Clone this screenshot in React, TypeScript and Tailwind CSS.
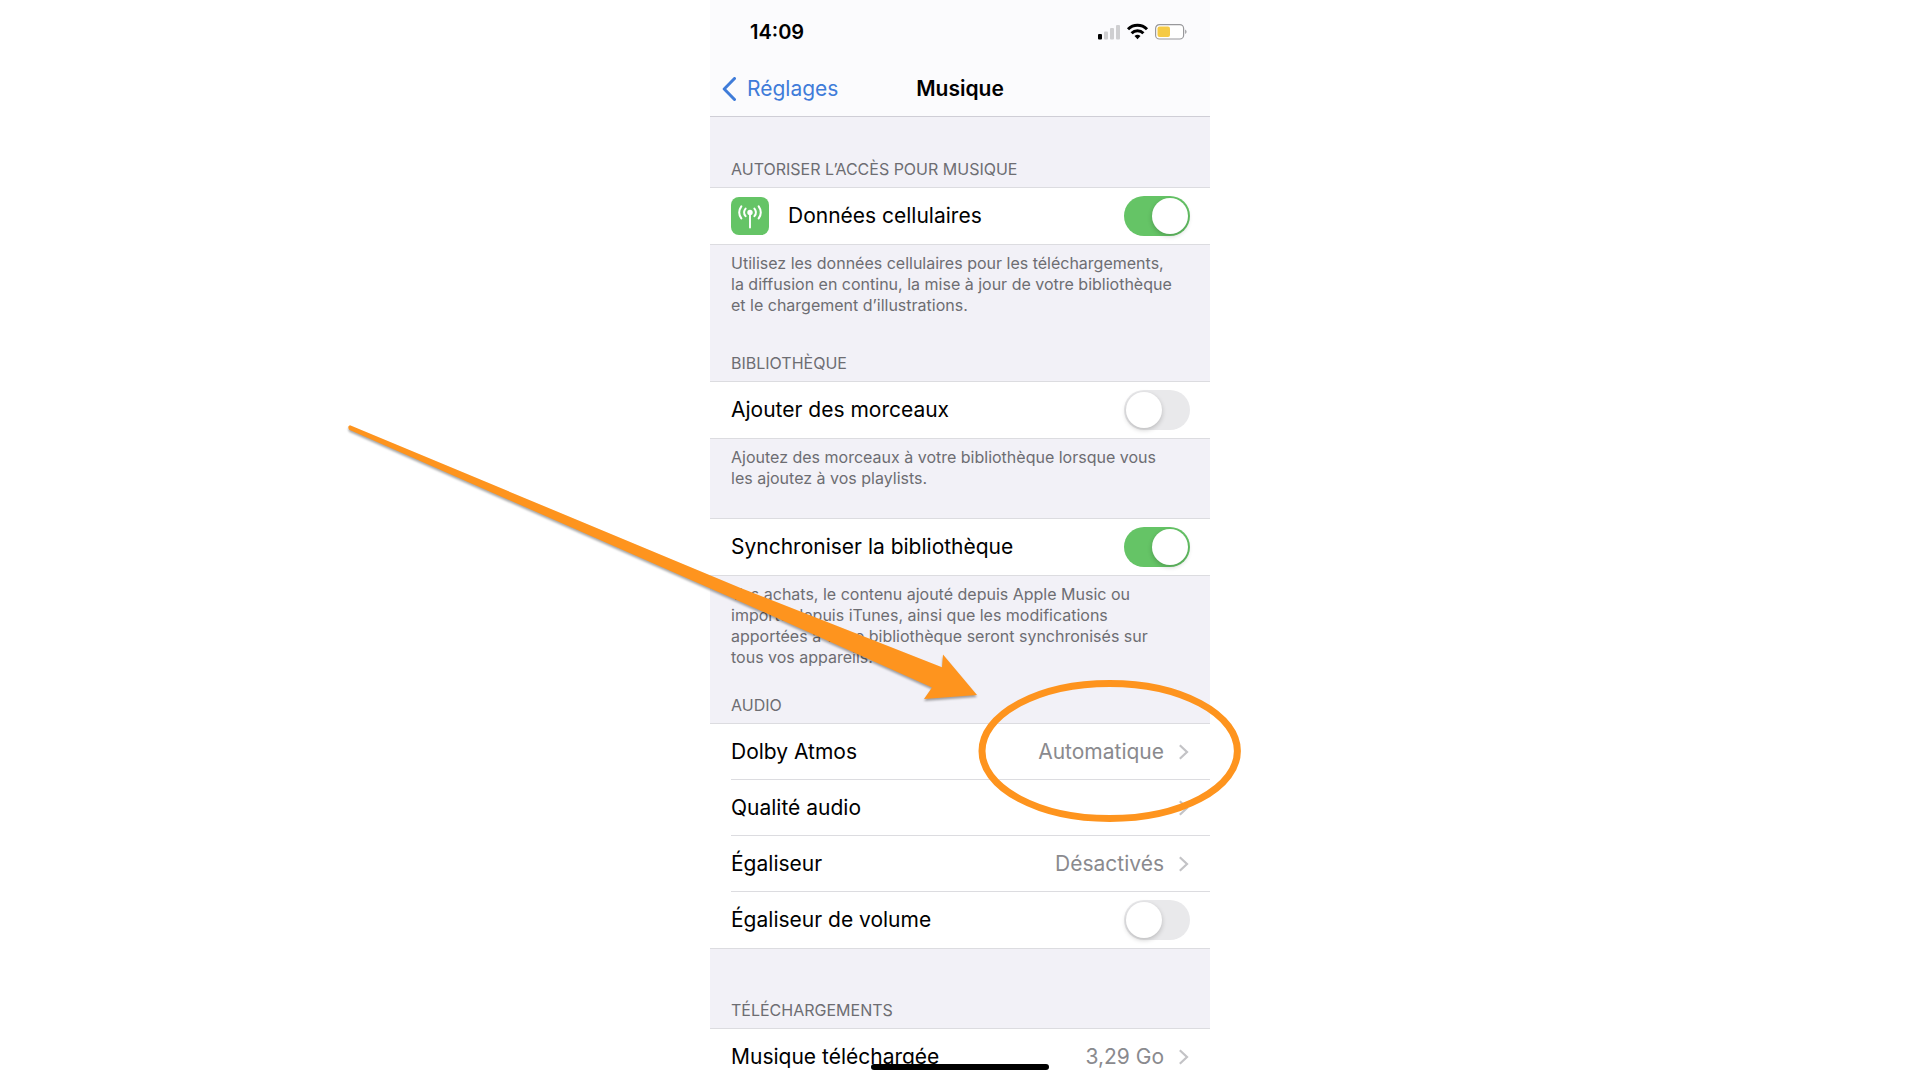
import { useId, type ReactNode } from "react";

function Chevron() {
  return (
    <svg className="ml-3.5 h-4 w-3 shrink-0" viewBox="0 0 12 16" fill="none" aria-hidden="true">
      <path d="M1.800 1.200 9 8l-7.200 6.800" stroke="#c3c3c6" strokeWidth="2.200" />
    </svg>
  );
}

function CellularIcon() {
  return (
    <svg className="mr-[19px] size-[38px] shrink-0" viewBox="0 0 38 38" fill="none" aria-hidden="true">
      <rect width="38" height="38" rx="8" fill="#65c466" />
      <g stroke="#fff" strokeLinecap="round">
        <path d="M19 16v14.500" strokeWidth="1.900" />
        <path d="M14.600 11.600a6 6 0 0 0 0 7.600M23.400 11.600a6 6 0 0 1 0 7.600" strokeWidth="2" />
        <path d="M10.300 9.400a10.500 10.500 0 0 0 0 12M27.700 9.400a10.500 10.500 0 0 1 0 12" strokeWidth="2" />
      </g>
      <circle cx="19" cy="15.400" r="2.700" fill="#fff" />
    </svg>
  );
}

function SwitchRow({ label, on = false, icon }: { label: string; on?: boolean; icon?: ReactNode }) {
  const id = useId();
  return (
    <div className="flex h-14 items-center pr-5">
      {icon}
      <label htmlFor={id} className="grow text-[21px] leading-7 text-black">
        {label}
      </label>
      <input
        id={id}
        type="checkbox"
        role="switch"
        defaultChecked={on}
        className="flex h-10 w-[66px] shrink-0 appearance-none items-center rounded-full bg-[#e9e9eb] px-0.5 before:size-9 before:rounded-full before:bg-white before:shadow-[0_2px_5px_rgba(0,0,0,0.2)] checked:justify-end checked:bg-[#65c466]"
      />
    </div>
  );
}

function LinkRow({ label, value }: { label: string; value?: string }) {
  return (
    <a href="#" className="flex h-14 items-center pr-5 text-[21px] leading-7">
      <span className="grow text-black">{label}</span>
      {value && <span className="text-[#8a8a8e]">{value}</span>}
      <Chevron />
    </a>
  );
}

function Group({ children }: { children: ReactNode }) {
  return (
    <div className="border-y border-[#dcdce0] bg-white pl-[21px]">
      <div className="divide-y divide-[#dcdce0]">{children}</div>
    </div>
  );
}

function Heading({ children }: { children: ReactNode }) {
  return <h2 className="px-[21px] pb-2 text-[16px] leading-5 text-[#6d6d72]">{children}</h2>;
}

function Note({ lines }: { lines: string[] }) {
  return (
    <p className="px-[21px] pt-2 text-[16px] leading-[21px] text-[#6d6d72]">
      {lines.map((line) => (
        <span key={line} className="block whitespace-nowrap">
          {line}
        </span>
      ))}
    </p>
  );
}

function StatusIcons() {
  return (
    <svg className="h-5 w-[90px]" viewBox="0 0 90 20" aria-hidden="true">
      <rect x="0" y="12" width="4" height="5.500" rx="1" fill="#000" />
      <g fill="#cfcfd1">
        <rect x="6" y="9.500" width="4" height="8" rx="1" />
        <rect x="12" y="6" width="4" height="11.500" rx="1" />
        <rect x="18" y="3" width="4" height="14.500" rx="1" />
      </g>
      <g fill="none" stroke="#000" strokeWidth="3">
        <path d="M30 7.200a13.600 13.600 0 0 1 19 0" />
        <path d="M33.600 11.200a8.400 8.400 0 0 1 11.800 0" />
      </g>
      <path d="M39.500 17.200l-3-3.100a4.300 4.300 0 0 1 6 0z" fill="#000" />
      <rect x="57.600" y="2.600" width="28" height="14.400" rx="3.800" fill="#fff" stroke="#98989b" strokeWidth="1.200" />
      <rect x="59.500" y="4.500" width="12.500" height="10.600" rx="2" fill="#f5ca45" />
      <path d="M87.200 7.500c1.800.7 1.800 3.700 0 4.400z" fill="#98989b" />
    </svg>
  );
}

function Annotation() {
  return (
    <svg
      className="pointer-events-none absolute top-[410px] -left-[370px] h-[420px] w-[910px]"
      viewBox="340 410 910 420"
      aria-hidden="true"
    >
      <path
        d="M350 425.300 740 587.700 942 667.300 943 654.500 977 695 924 699 932 687.500 740 601.500 349.200 429.700Q347 426 350 425.300Z"
        fill="#fe941e"
        className="drop-shadow-[0_2px_1px_rgba(0,0,0,0.35)]"
      />
      <ellipse cx="1109.700" cy="751" rx="127.700" ry="67.500" fill="none" stroke="#fe941e" strokeWidth="7" />
    </svg>
  );
}

export default function App() {
  return (
    <div className="h-screen overflow-hidden bg-white font-['Inter',sans-serif]">
      <div className="relative mx-auto h-full max-w-[500px] bg-[#f2f1f7]">
        <div className="h-full overflow-hidden">
          <header className="border-b border-[#cfced6] bg-[#fbfbfd]">
            <div className="flex h-16 items-center justify-between pr-[22px] pl-10">
              <time className="text-[20px] leading-6 font-semibold">14:09</time>
              <StatusIcons />
            </div>
            <nav className="grid h-[52px] grid-cols-3 items-center pb-0.5 text-[21px] leading-7">
              <a href="#" className="flex items-center pl-3 text-[#3f7cd9]">
                <svg className="mr-[11px] h-6 w-3.5" viewBox="0 0 14 24" fill="none" aria-hidden="true">
                  <path d="M12.500 1.500 2.200 12l10.300 10.500" stroke="currentColor" strokeWidth="3" strokeLinecap="round" strokeLinejoin="round" />
                </svg>
                Réglages
              </a>
              <h1 className="text-center font-semibold">Musique</h1>
            </nav>
          </header>
          <main>
            <section className="pt-[42px]">
              <Heading>AUTORISER L’ACCÈS POUR MUSIQUE</Heading>
              <Group>
                <SwitchRow label="Données cellulaires" on icon={<CellularIcon />} />
              </Group>
              <Note
                lines={[
                  "Utilisez les données cellulaires pour les téléchargements,",
                  "la diffusion en continu, la mise à jour de votre bibliothèque",
                  "et le chargement d’illustrations.",
                ]}
              />
            </section>
            <section className="pt-[37px]">
              <Heading>BIBLIOTHÈQUE</Heading>
              <Group>
                <SwitchRow label="Ajouter des morceaux" />
              </Group>
              <Note lines={["Ajoutez des morceaux à votre bibliothèque lorsque vous", "les ajoutez à vos playlists."]} />
            </section>
            <section className="pt-[29px]">
              <Group>
                <SwitchRow label="Synchroniser la bibliothèque" on />
              </Group>
              <Note
                lines={[
                  "Vos achats, le contenu ajouté depuis Apple Music ou",
                  "importé depuis iTunes, ainsi que les modifications",
                  "apportées à votre bibliothèque seront synchronisés sur",
                  "tous vos appareils.",
                ]}
              />
            </section>
            <section className="pt-[27px]">
              <Heading>AUDIO</Heading>
              <Group>
                <LinkRow label="Dolby Atmos" value="Automatique" />
                <LinkRow label="Qualité audio" />
                <LinkRow label="Égaliseur" value="Désactivés" />
                <SwitchRow label="Égaliseur de volume" />
              </Group>
            </section>
            <section className="pt-[51px]">
              <Heading>TÉLÉCHARGEMENTS</Heading>
              <Group>
                <LinkRow label="Musique téléchargée" value="3,29 Go" />
              </Group>
            </section>
          </main>
        </div>
        <div className="absolute inset-x-0 bottom-2.5 mx-auto h-1.5 w-[178px] rounded-full bg-black" />
        <Annotation />
      </div>
    </div>
  );
}
